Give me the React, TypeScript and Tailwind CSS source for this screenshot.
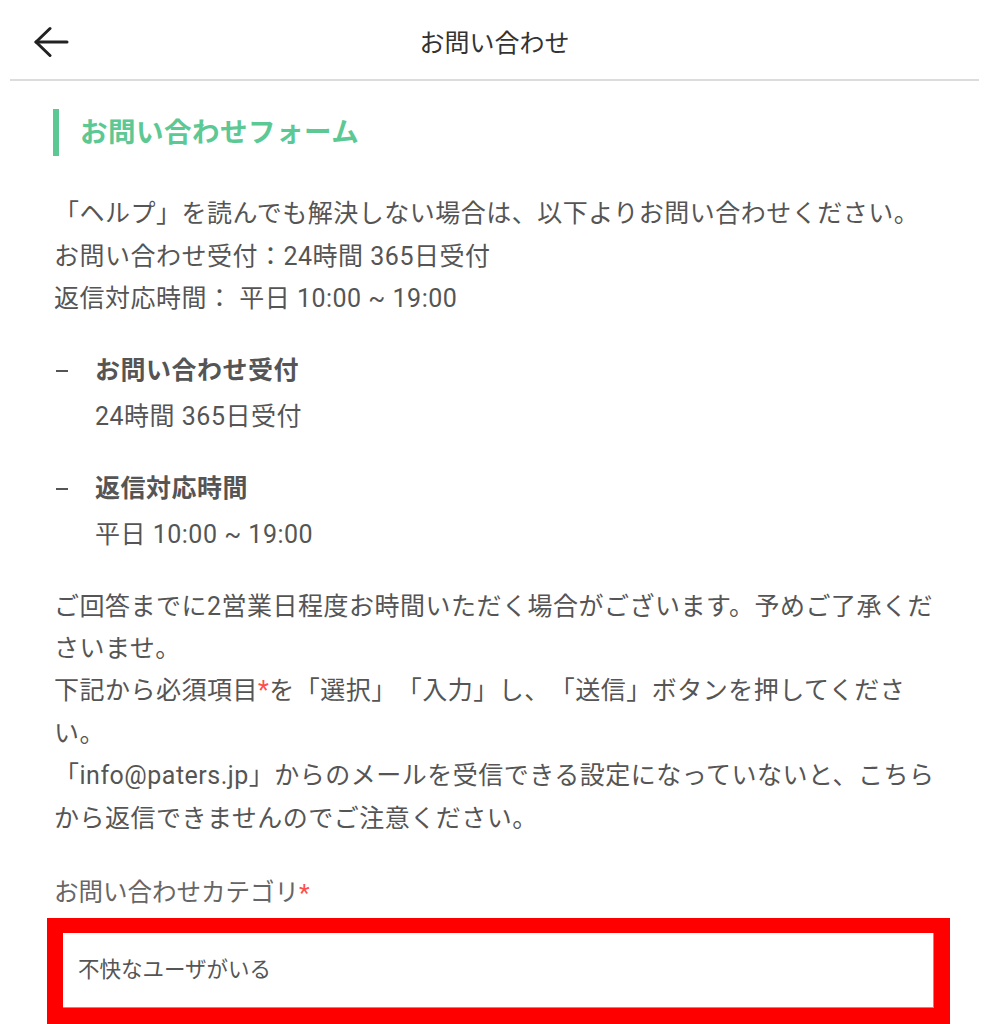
const font = { fontFamily: 'Roboto, "Noto Sans CJK JP", "Noto Sans", sans-serif' };

const BackArrow = () => (
  <svg width="36" height="32" viewBox="0 0 36 32" fill="none" stroke="#222" strokeWidth="3" strokeLinecap="round" strokeLinejoin="round">
    <path d="M2 16H33" />
    <path d="M16 2.5L2 16L16 29.5" />
  </svg>
);

const Req = () => <span className="text-[#ff4d4d]">*</span>;

const InfoItem = ({ title, body, first }: { title: string; body: string; first?: boolean }) => (
  <div className={first ? "mt-[29px]" : "mt-[30px]"}>
    <div className="flex items-center leading-[42px]">
      <span className="w-[41px] flex items-center">
        <span className="block w-[12px] h-[2px] bg-[#555] ml-[2px]" />
      </span>
      <span className="font-bold text-[#555]">{title}</span>
    </div>
    <div className="mt-[4px] pl-[41px] leading-[42px]">{body}</div>
  </div>
);

export default function App() {
  return (
    <div className="w-[1004px] min-h-[1024px] bg-white overflow-hidden [text-spacing-trim:space-all]" style={font}>
      <div className="mx-[10px] w-[969px]">
        <header className="relative h-[79px] pt-[8px] flex items-center justify-center">
          <button className="absolute left-[24px] top-[26px]">
            <BackArrow />
          </button>
          <h1 className="text-[25px] text-[#333]">お問い合わせ</h1>
        </header>
        <div className="h-[2px] bg-[#dcdcdc]" />

        <main className="pl-[44px] pr-[29px] text-[25px] text-[#555] tracking-[0.02em]">
          <h2 className="mt-[28px] -ml-[1px] border-l-[6px] border-[#5cc894] pl-[21px] h-[47px] flex items-center text-[27.5px] font-bold text-[#5cc894]">
            お問い合わせフォーム
          </h2>

          <div className="mt-[37px] leading-[42.5px]">
            <p>「ヘルプ」を読んでも解決しない場合は、以下よりお問い合わせください。</p>
            <p>お問い合わせ受付：24時間 365日受付</p>
            <p>返信対応時間： 平日 10:00 ~ 19:00</p>
          </div>

          <InfoItem first title="お問い合わせ受付" body="24時間 365日受付" />
          <InfoItem title="返信対応時間" body="平日 10:00 ~ 19:00" />

          <div className="mt-[30px] leading-[42.4px]">
            <p>ご回答までに2営業日程度お時間いただく場合がございます。予めご了承くださいませ。</p>
            <p>
              下記から必須項目<Req />を「選択」「入力」し、「送信」ボタンを押してください。
            </p>
            <p>「info@paters.jp」からのメールを受信できる設定になっていないと、こちらから返信できませんのでご注意ください。</p>
          </div>

          <div className="mt-[32px] leading-[42px] text-[24.5px] text-[#666] tracking-normal">
            お問い合わせカテゴリ<Req />
          </div>

          <div className="mt-[4px] -ml-[7px] w-[903px] border-[16px] border-t-[15px] border-[#ff0000]">
            <div className="h-[75px] bg-white border-r border-b border-[#999] pl-[15px] pt-[21px] text-[21.5px] text-[#555] tracking-normal">
              不快なユーザがいる
            </div>
          </div>
        </main>
      </div>
    </div>
  );
}
